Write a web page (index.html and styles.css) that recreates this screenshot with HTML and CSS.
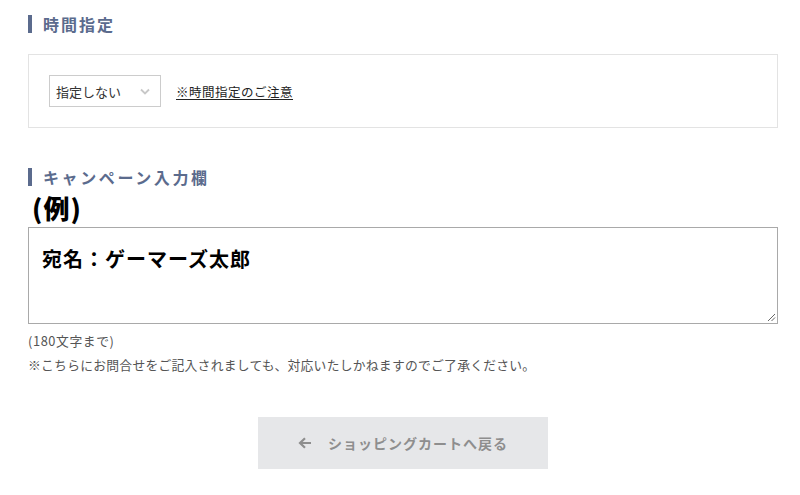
FILE: index.html
```html
<!DOCTYPE html>
<html lang="ja">
<head>
<meta charset="utf-8">
<title>時間指定</title>
<link rel="stylesheet" href="styles.css">
</head>
<body>
<main class="page">
  <h2 class="sec-title sec-title--first">時間指定</h2>
  <div class="panel">
    <div class="select">
      <span class="select-label">指定しない</span>
      <svg class="select-chev" width="10" height="7" viewBox="0 0 10 7"><path d="M1 1.5 L5 5.5 L9 1.5" fill="none" stroke="#c8c8c8" stroke-width="1.8"/></svg>
    </div>
    <a class="note-link" href="#">※時間指定のご注意</a>
  </div>

  <h2 class="sec-title sec-title--second">キャンペーン入力欄</h2>
  <div class="example">(例)</div>
  <div class="textbox">
    <p class="textbox-text">宛名：ゲーマーズ太郎</p>
    <svg class="grip" width="10" height="10" viewBox="0 0 10 10"><path d="M9 2 L2 9 M9 5.5 L5.5 9" stroke="#666" stroke-width="1" fill="none"/></svg>
  </div>
  <p class="note">(180文字まで)</p>
  <p class="note">※こちらにお問合せをご記入されましても、対応いたしかねますのでご了承ください。</p>

  <div class="actions">
    <button class="back-btn" type="button">
      <svg width="14" height="12" viewBox="0 0 14 12"><path d="M13 6 H2.5 M7 1.2 L2 6 L7 10.8" fill="none" stroke="#8e8e8e" stroke-width="2.2"/></svg>
      <span>ショッピングカートへ戻る</span>
    </button>
  </div>
</main>
</body>
</html>
```

FILE: styles.css
```css
* { box-sizing: border-box; }
html, body { margin: 0; padding: 0; background: #fff; }
body {
  font-family: "Noto Sans CJK JP", "Noto Sans", sans-serif;
  color: #333;
}
.page {
  width: 750px;
  margin-left: 28px;
}
.sec-title {
  margin: 0;
  border-left: 4px solid #5b6b8d;
  padding-left: 11px;
  font-size: 16px;
  line-height: 18px;
  font-weight: 700;
  letter-spacing: 2px;
  color: #5b6b8d;
}
.sec-title--first { margin-top: 15px; }
.sec-title--second { margin-top: 40px; font-weight: 600; letter-spacing: 2.6px; }
.panel {
  margin-top: 21px;
  border: 1px solid #e3e3e3;
  padding: 20px;
  display: flex;
  align-items: center;
  gap: 15px;
}
.select {
  width: 112px;
  height: 32px;
  border: 1px solid #cccccc;
  display: flex;
  align-items: center;
  justify-content: space-between;
  padding: 0 10px 0 6px;
  font-size: 13px;
  color: #333;
}
.select-label { line-height: 1; }
.note-link {
  font-size: 12.5px;
  letter-spacing: 0.5px;
  color: #222;
  text-decoration: underline;
  text-underline-offset: 2px;
}
.example {
  margin-top: 5px;
  padding-left: 4px;
  font-size: 26px;
  line-height: 34px;
  font-weight: 900;
  letter-spacing: 1px;
  color: #000;
}
.textbox {
  position: relative;
  margin-top: 2px;
  height: 97px;
  border: 1px solid #a9a9a9;
  padding: 17px 13px 0;
}
.textbox-text {
  margin: 0;
  font-size: 20px;
  line-height: 28px;
  font-weight: 700;
  color: #000;
  letter-spacing: 1px;
}
.grip {
  position: absolute;
  right: 1px;
  bottom: 1px;
}
.note {
  margin: 0;
  font-size: 12.8px;
  line-height: 24px;
  letter-spacing: 0.25px;
  color: #555;
}
.note:first-of-type { margin-top: 5px; letter-spacing: 0.6px; }
.actions {
  margin-top: 40px;
  display: flex;
  justify-content: center;
}
.back-btn {
  width: 290px;
  height: 52px;
  border: 0;
  background: #e6e7e9;
  display: flex;
  align-items: center;
  justify-content: center;
  gap: 16px;
  font-family: inherit;
  font-size: 14px;
  font-weight: 700;
  letter-spacing: 1px;
  color: #8e8e8e;
  padding: 0;
}
```
